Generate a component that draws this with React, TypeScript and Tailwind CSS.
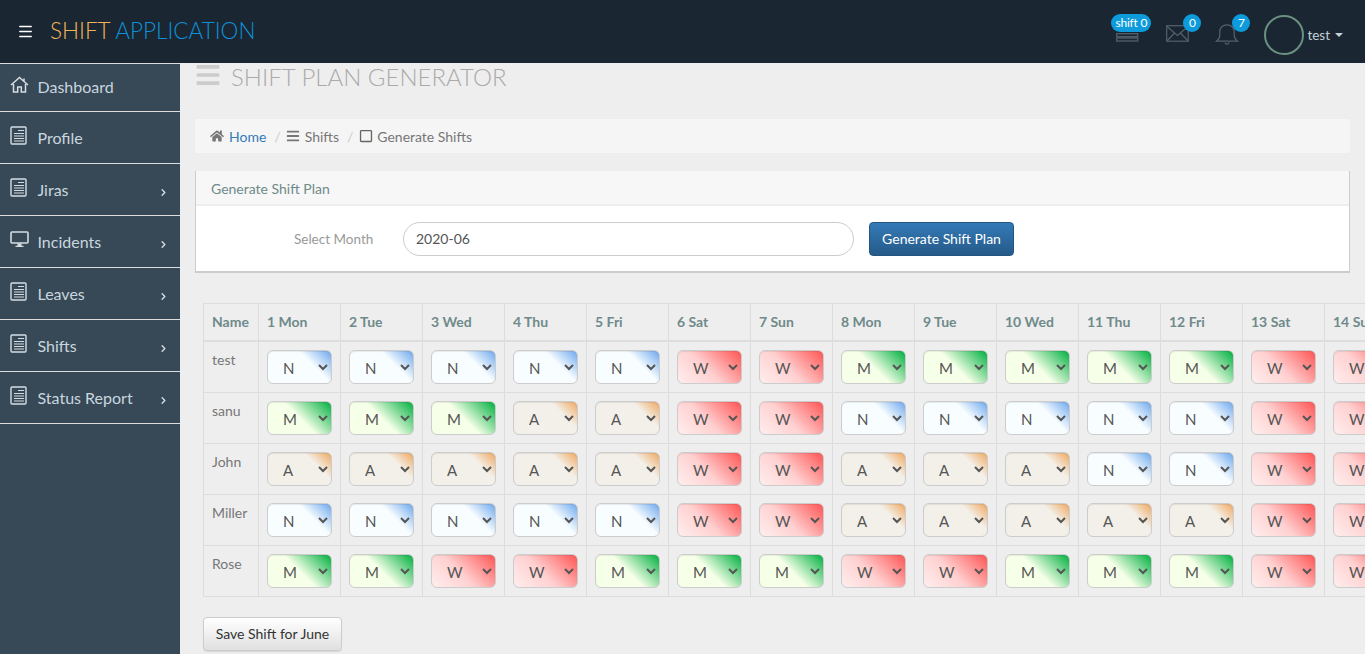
import { Fragment } from "react";
import { ChevronRight, Menu as MenuIcon } from "lucide-react";
import { FaHome, FaBars, FaRegSquare } from "react-icons/fa";

const grad: Record<string, string> = {
  N: "bg-[linear-gradient(45deg,#f8fdff_0%,#f8fdff_66%,#6ea8ee_100%)]",
  M: "bg-[linear-gradient(45deg,#f6ffe8_0%,#f6ffe8_50%,#00b040_100%)]",
  A: "bg-[linear-gradient(45deg,#f3f0e9_0%,#f3f0e9_72%,#f0a860_100%)]",
  W: "bg-[linear-gradient(45deg,#ffeeee_0%,#ffd0d0_45%,#ff5555_100%)]",
};

const days = ["1 Mon","2 Tue","3 Wed","4 Thu","5 Fri","6 Sat","7 Sun","8 Mon","9 Tue","10 Wed","11 Thu","12 Fri","13 Sat","14 Sun"];
const rows: [string, string][] = [
  ["test", "NNNNNWWMMMMMWW"],
  ["sanu", "MMMAAWWNNNNNWW"],
  ["John", "AAAAAWWAAANNWW"],
  ["Miller", "NNNNNWWAAAAAWW"],
  ["Rose", "MMWWMMMWWMMMWW"],
];

function Doc() {
  return (
    <svg width="17" height="19" viewBox="0 0 17 19" fill="none" stroke="#d5dde3" strokeWidth="1.4">
      <rect x="1" y="1" width="15" height="17" rx="1" />
      <path d="M8 4.5h6M4 7.5h10M4 10h10M4 12.5h10M4 15h10" strokeWidth="1.2" />
    </svg>
  );
}
function HomeLine() {
  return (
    <svg width="19" height="17" viewBox="0 0 19 17" fill="none" stroke="#d5dde3" strokeWidth="1.5">
      <path d="M1 9 9.5 1.5 18 9M3.5 8v8h4.2v-5h3.6v5h4.2V8M14 2.5V5" />
    </svg>
  );
}
function Monitor() {
  return (
    <svg width="19" height="17" viewBox="0 0 19 17" fill="none">
      <rect x="1" y="1" width="17" height="11" rx="1" stroke="#d5dde3" strokeWidth="1.6" />
      <path d="M7.5 12.5h4v2.3h2V16h-8v-1.2h2z" fill="#d5dde3" />
    </svg>
  );
}

const nav = [
  { label: "Dashboard", icon: <HomeLine />, arrow: false, h: "h-[48px] pb-[2px]" },
  { label: "Profile", icon: <Doc />, arrow: false, h: "h-[52px]" },
  { label: "Jiras", icon: <Doc />, arrow: true, h: "h-[52px]" },
  { label: "Incidents", icon: <Monitor />, arrow: true, h: "h-[52px]" },
  { label: "Leaves", icon: <Doc />, arrow: true, h: "h-[52px]" },
  { label: "Shifts", icon: <Doc />, arrow: true, h: "h-[52px]" },
  { label: "Status Report", icon: <Doc />, arrow: true, h: "h-[52px]" },
];

function Badge({ children, className }: { children: React.ReactNode; className: string }) {
  return (
    <span className={"absolute flex h-[18px] items-center justify-center rounded-full bg-[#0d9bdc] text-[12px] tracking-[-0.2px] text-white " + className}>
      {children}
    </span>
  );
}

export default function App() {
  return (
    <div className="flex h-[654px] w-[1365px] flex-col overflow-hidden bg-[#eeeeee] font-['Lato','Liberation_Sans',sans-serif] text-[14px] text-[#777777]">
      <header className="flex h-[63px] shrink-0 items-center bg-[#1a2732]">
        <MenuIcon size={17} strokeWidth={2.2} className="ml-[17px] text-white" />
        <div className="ml-[16px] text-[22.5px] font-light leading-none">
          <span className="text-[#f5b35c]">SHIFT</span> <span className="text-[#0f8fd8]">APPLICATION</span>
        </div>
        <div className="ml-auto flex h-full items-center pr-[22px] pt-[7px]">
          <div className="relative h-[40px] w-[26px]">
            <svg width="24" height="9" viewBox="0 0 24 9" fill="none" stroke="#55606a" strokeWidth="1.3" className="absolute left-[2px] top-[18px]">
              <rect x="0.7" y="0.7" width="21" height="3" />
              <rect x="0.7" y="5" width="21" height="3" />
            </svg>
            <Badge className="left-[-3px] top-[-1px] w-[40px]">shift 0</Badge>
          </div>
          <div className="relative ml-[26px] h-[40px] w-[26px]">
            <svg width="23" height="17" viewBox="0 0 23 17" fill="none" stroke="#55606a" strokeWidth="1.2" className="absolute left-0 top-[10px]">
              <rect x="0.7" y="0.7" width="21.5" height="15.5" />
              <path d="m1 1.5 10.5 9 10.5-9M1 16l7.5-8M22 16l-7.5-8" />
            </svg>
            <Badge className="left-[17px] top-[-1px] w-[18px]">0</Badge>
          </div>
          <div className="relative ml-[22px] h-[40px] w-[26px]">
            <svg width="24" height="24" viewBox="0 0 24 25" fill="none" stroke="#55606a" strokeWidth="1.3" className="absolute left-[1px] top-[7px]">
              <path d="M1 20c2-1.5 3.5-3.5 3.5-6.5V10c0-4 3-7 7.5-7s7.5 3 7.5 7v3.5c0 3 1.5 5 3.5 6.5z" />
              <path d="M10 21.5c.5 2.2 3.5 2.2 4 0" />
            </svg>
            <Badge className="left-[18px] top-[-1px] w-[18px]">7</Badge>
          </div>
          <div className="ml-[24px] h-[40px] w-[40px] rounded-full border-2 border-[#6b9080]" />
          <span className="ml-[3px] text-[13.5px] text-[#c5d0d8]">test</span>
          <span className="ml-[5px] h-0 w-0 border-x-4 border-t-4 border-x-transparent border-t-[#c5d0d8]" />
        </div>
      </header>

      <div className="flex min-h-0 flex-1">
        <aside className="w-[180px] shrink-0 border-t border-[#dddddd] bg-[#374957]">
          {nav.map((n) => (
            <div key={n.label} className={"flex items-center border-b border-[#dddddd] pl-[10px] pr-[11px] text-[16px] text-[#c9d6df] " + n.h}>
              <span className="flex w-[27.5px] -translate-y-[2px]">{n.icon}</span>
              <span>{n.label}</span>
              {n.arrow && <ChevronRight size={11} strokeWidth={3} className="ml-auto mt-[5px] text-[#d5dde3]" />}
            </div>
          ))}
        </aside>

        <main className="min-w-0 flex-1 overflow-hidden">
          <div className="flex h-[28px] items-center pl-[15px] text-[24px] font-light leading-none text-[#aaaaaa]">
            <FaBars size={26} className="mb-[4px] text-[#cccccc]" />
            <span className="ml-[10px]">SHIFT PLAN GENERATOR</span>
          </div>

          <div className="ml-[15px] mr-[15px] mt-[28px] flex h-[34px] items-center bg-[#f5f5f5] pl-[15px] text-[14px]">
            <FaHome size={14} className="text-[#777777]" />
            <span className="ml-[5px] text-[#337ab7]">Home</span>
            <span className="ml-[8px] mr-[5px] text-[#cccccc]">/</span>
            <FaBars size={14} className="text-[#777777]" />
            <span className="ml-[5px]">Shifts</span>
            <span className="ml-[8px] mr-[6px] text-[#cccccc]">/</span>
            <FaRegSquare size={14} className="text-[#666666]" />
            <span className="ml-[4px]">Generate Shifts</span>
          </div>

          <section className="ml-[15px] mr-[15px] mt-[18px] h-[102px] border-b-2 border-l border-r border-[#cccccc] bg-white">
            <div className="flex h-[35px] items-center border-b-2 border-[#eeeeee] bg-[#f7f7f7] pl-[15px] pt-[1px] text-[14px] text-[#6f8a8a]">
              Generate Shift Plan
            </div>
            <div className="flex h-[65px] items-center">
              <span className="ml-[98px] w-[109px] pt-[1px] text-[13.5px] text-[#999999]">Select Month</span>
              <input
                readOnly
                value="2020-06"
                className="h-[34px] w-[451px] rounded-full border border-[#cccccc] bg-white px-[12px] text-[14px] text-[#555555] outline-none"
              />
              <button className="ml-[15px] h-[34px] w-[145px] rounded-[4px] border border-[#245580] bg-[linear-gradient(#337ab7,#265a88)] text-[14px] text-white">
                Generate Shift Plan
              </button>
            </div>
          </section>

          <div className="ml-[23px] mt-[30px] w-max">
            <div className="grid grid-cols-[55px_repeat(14,82px)] border-l border-t border-[#dddddd]">
              <div className="flex h-[38px] items-center border-b-2 border-r border-[#dddddd] pb-[2px] pl-[8px] font-bold text-[#6f8a8a]">Name</div>
              {days.map((d) => (
                <div key={d} className="flex h-[38px] items-center border-b-2 border-r border-[#dddddd] pb-[2px] pl-[8px] font-bold text-[#6f8a8a]">{d}</div>
              ))}
              {rows.map(([name, shifts]) => (
                <Fragment key={name}>
                  <div className="h-[51px] border-b border-r border-[#dddddd] pl-[8px] pt-[7px] text-[#777777]">{name}</div>
                  {shifts.split("").map((s, i) => (
                    <div key={i} className="flex h-[51px] items-start border-b border-r border-[#dddddd] pl-[8px] pt-[8px]">
                      <select
                        defaultValue={s}
                        className={"h-[34px] w-[65px] rounded-[6px] border border-[#cccccc] pl-[11px] pr-[2px] pt-[2px] text-[15px] text-[#555555] shadow-[inset_0_1px_1px_rgba(0,0,0,0.075)] " + grad[s]}
                      >
                        <option>{s}</option>
                      </select>
                    </div>
                  ))}
                </Fragment>
              ))}
            </div>
            <button className="mt-[20px] h-[34px] w-[139px] rounded-[4px] border border-[#cccccc] bg-[linear-gradient(#ffffff,#e0e0e0)] pb-[1px] text-[14px] text-[#333333] shadow-[0_1px_1px_rgba(0,0,0,0.1)]">
              Save Shift for June
            </button>
          </div>
        </main>
      </div>
    </div>
  );
}
